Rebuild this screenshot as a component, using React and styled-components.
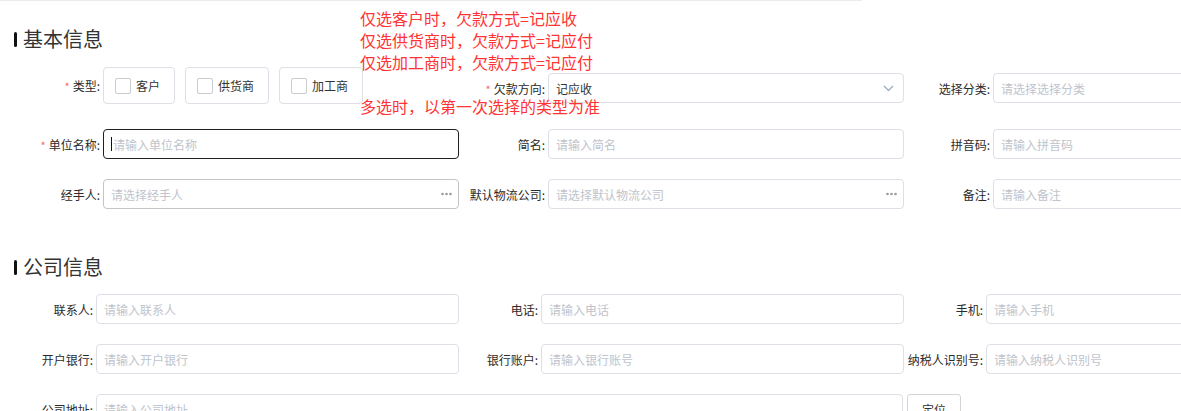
import React from "react";
import styled, { createGlobalStyle } from "styled-components";

const GlobalStyle = createGlobalStyle`
  html, body {
    margin: 0;
    padding: 0;
    overflow: hidden;
    background: #ffffff;
    font-family: "Noto Sans CJK SC", "Noto Sans", "Liberation Sans", sans-serif;
  }
`;

const Page = styled.div`
  position: relative;
  width: 1181px;
  height: 411px;
  overflow: hidden;
`;

const TopRule = styled.div`
  width: 862px;
  height: 1px;
  background: #ebebeb;
`;

const Section = styled.section`
  padding-left: 14px;
  margin-top: ${(p) => p.$top}px;
`;

const Title = styled.h2`
  margin: 0;
  height: 28px;
  display: flex;
  align-items: center;
  gap: 6px;
  font-size: 20px;
  font-weight: 400;
  color: #333;
  line-height: 28px;
`;

const Bar = styled.span`
  width: 3px;
  height: 15px;
  border-radius: 1.5px;
  background: #111;
`;

const Row = styled.div`
  display: flex;
  align-items: ${(p) => (p.$start ? "flex-start" : "center")};
  margin-top: ${(p) => p.$top}px;
`;

const Item = styled.div`
  display: flex;
  align-items: center;
  flex-shrink: 0;
  width: ${(p) => p.$w}px;
  padding-top: ${(p) => p.$pt || 0}px;
`;

const Label = styled.label`
  flex-shrink: 0;
  width: ${(p) => p.$w}px;
  box-sizing: border-box;
  padding-right: 3px;
  text-align: right;
  font-size: 12px;
  color: #2b2b2b;
  white-space: nowrap;
`;

const Star = styled.span`
  color: #f56c6c;
  margin-right: 3px;
  font-size: 11px;
`;

const Field = styled.div`
  box-sizing: border-box;
  flex-shrink: 0;
  width: ${(p) => p.$w}px;
  height: 30px;
  display: flex;
  align-items: center;
  padding: 0 ${(p) => p.$pr || 8}px 0 7px;
  border: 1px solid
    ${(p) => (p.$focus ? "#1f1f1f" : p.$hover ? "#c4c4c4" : "#dcdfe6")};
  border-radius: 4px;
  background: #fff;
  font-size: 12px;
`;

const Placeholder = styled.span`
  flex: 1;
  color: #c0c4cc;
  white-space: nowrap;
  overflow: hidden;
`;

const Value = styled.span`
  flex: 1;
  color: #333;
`;

const Caret = styled.span`
  width: 1px;
  height: 14px;
  background: #111;
  margin-right: 1px;
`;

const CheckGroup = styled.div`
  display: flex;
  gap: 10px;
`;

const CheckButton = styled.div`
  box-sizing: border-box;
  height: 37px;
  display: flex;
  align-items: center;
  gap: 5px;
  padding: 0 14px 0 11px;
  border: 1px solid #dcdfe6;
  border-radius: 4px;
  font-size: 12px;
  color: #333;
  background: #fff;
`;

const Box = styled.span`
  box-sizing: border-box;
  width: 16px;
  height: 16px;
  border: 1px solid #c8cbd0;
  border-radius: 2px;
`;

const LocateButton = styled.button`
  box-sizing: border-box;
  flex-shrink: 0;
  margin-left: 4px;
  width: 54px;
  height: 30px;
  border: 1px solid #d4d4d4;
  border-radius: 3px;
  background: #fff;
  font-family: inherit;
  font-size: 12px;
  color: #333;
  padding: 0;
`;

const Notes = styled.div`
  position: absolute;
  left: 360px;
  top: 7px;
  font-size: 16px;
  line-height: 22px;
  color: #ff3333;
  white-space: pre;
`;

const Chevron = () => (
  <svg width="11" height="7" viewBox="0 0 11 7">
    <polyline points="1,1 5.5,5.5 10,1" fill="none" stroke="#95a3b8" strokeWidth="1.1" />
  </svg>
);

const Dots = () => (
  <svg width="11" height="4" viewBox="0 0 11 4">
    <circle cx="1.5" cy="2" r="1.3" fill="#9a9a9a" />
    <circle cx="5.5" cy="2" r="1.3" fill="#9a9a9a" />
    <circle cx="9.5" cy="2" r="1.3" fill="#9a9a9a" />
  </svg>
);

const FormField = ({ label, lw, cw, required, children, pt }) => (
  <Item $w={lw + cw} $pt={pt}>
    <Label $w={lw}>
      {required && <Star>*</Star>}
      {label}:
    </Label>
    {children}
  </Item>
);

const Input = ({ w, placeholder, focus, hover, picker }) => (
  <Field $w={w} $focus={focus} $hover={hover} $pr={picker ? 6 : 8}>
    {focus && <Caret />}
    <Placeholder>{placeholder}</Placeholder>
    {picker && <Dots />}
  </Field>
);

export default function App() {
  const L1 = 89;
  const C1 = 356;
  const L2 = 82;
  const C2 = 363;
  return (
    <Page>
      <GlobalStyle />
      <TopRule />
      <Section $top={24}>
        <Title>
          <Bar />
          基本信息
        </Title>
        <Row $start $top={14}>
          <FormField label="类型" lw={L1} cw={C1} required>
            <CheckGroup>
              {["客户", "供货商", "加工商"].map((t) => (
                <CheckButton key={t}>
                  <Box />
                  {t}
                </CheckButton>
              ))}
            </CheckGroup>
          </FormField>
          <FormField label="欠款方向" lw={L1} cw={C1} required pt={6}>
            <Field $w={C1} $pr={9}>
              <Value>记应收</Value>
              <Chevron />
            </Field>
          </FormField>
          <FormField label="选择分类" lw={L1} cw={C1} pt={6}>
            <Input w={C1} placeholder="请选择选择分类" />
          </FormField>
        </Row>
        <Row $top={25}>
          <FormField label="单位名称" lw={L1} cw={C1} required>
            <Input w={C1} placeholder="请输入单位名称" focus />
          </FormField>
          <FormField label="简名" lw={L1} cw={C1}>
            <Input w={C1} placeholder="请输入简名" />
          </FormField>
          <FormField label="拼音码" lw={L1} cw={C1}>
            <Input w={C1} placeholder="请输入拼音码" />
          </FormField>
        </Row>
        <Row $top={20}>
          <FormField label="经手人" lw={L1} cw={C1}>
            <Input w={C1} placeholder="请选择经手人" hover picker />
          </FormField>
          <FormField label="默认物流公司" lw={L1} cw={C1}>
            <Input w={C1} placeholder="请选择默认物流公司" picker />
          </FormField>
          <FormField label="备注" lw={L1} cw={C1}>
            <Input w={C1} placeholder="请输入备注" />
          </FormField>
        </Row>
      </Section>
      <Section $top={44}>
        <Title>
          <Bar />
          公司信息
        </Title>
        <Row $top={13}>
          <FormField label="联系人" lw={L2} cw={C2}>
            <Input w={C2} placeholder="请输入联系人" />
          </FormField>
          <FormField label="电话" lw={L2} cw={C2}>
            <Input w={C2} placeholder="请输入电话" />
          </FormField>
          <FormField label="手机" lw={L2} cw={C2}>
            <Input w={C2} placeholder="请输入手机" />
          </FormField>
        </Row>
        <Row $top={20}>
          <FormField label="开户银行" lw={L2} cw={C2}>
            <Input w={C2} placeholder="请输入开户银行" />
          </FormField>
          <FormField label="银行账户" lw={L2} cw={C2}>
            <Input w={C2} placeholder="请输入银行账号" />
          </FormField>
          <FormField label="纳税人识别号" lw={L2} cw={C2}>
            <Input w={C2} placeholder="请输入纳税人识别号" />
          </FormField>
        </Row>
        <Row $top={20}>
          <FormField label="公司地址" lw={L2} cw={807 + 58}>
            <Input w={807} placeholder="请输入公司地址" />
            <LocateButton>定位</LocateButton>
          </FormField>
        </Row>
      </Section>
      <Notes>
        {"仅选客户时，欠款方式=记应收\n仅选供货商时，欠款方式=记应付\n仅选加工商时，欠款方式=记应付\n\n多选时，以第一次选择的类型为准"}
      </Notes>
    </Page>
  );
}
